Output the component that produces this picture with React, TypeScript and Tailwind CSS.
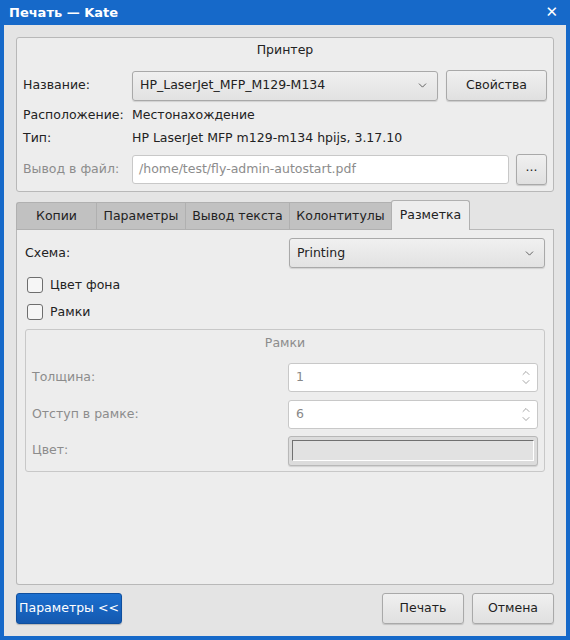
import { ChevronDown, ChevronUp } from "lucide-react";

function Btn({ children, className = "" }: { children: React.ReactNode; className?: string }) {
  return (
    <div
      className={`flex items-center justify-center rounded-[3px] border border-[#a9a9a9] bg-gradient-to-b from-[#f0f0f0] to-[#e0e0e0] shadow-[0_1px_1px_rgba(0,0,0,0.15)] text-[#1e1e1e] ${className}`}
    >
      {children}
    </div>
  );
}

function Combo({ value, className = "" }: { value: string; className?: string }) {
  return (
    <div
      className={`flex items-center justify-between rounded-[3px] border border-[#a9a9a9] bg-gradient-to-b from-[#f0f0f0] to-[#e2e2e2] pl-[7px] pr-[8px] shadow-[0_1px_1px_rgba(0,0,0,0.12)] ${className}`}
    >
      <span>{value}</span>
      <ChevronDown size={13} strokeWidth={1.5} className="text-[#444]" />
    </div>
  );
}

function Spin({ value }: { value: string }) {
  return (
    <div className="flex h-[29px] items-center justify-between rounded-[3px] border border-[#c8c8c8] bg-white pl-[7px] pr-[5px] text-[#888]">
      <span>{value}</span>
      <div className="flex flex-col items-center -space-y-[3px] text-[#777]">
        <ChevronUp size={12} strokeWidth={1.3} />
        <ChevronDown size={12} strokeWidth={1.3} />
      </div>
    </div>
  );
}

function Check({ label }: { label: string }) {
  return (
    <div className="flex items-center gap-[7px]">
      <div className="h-[16px] w-[16px] rounded-[3px] border border-[#6e6e6e] bg-[#f6f6f6]" />
      <span>{label}</span>
    </div>
  );
}

export default function App() {
  const tabs = ["Копии", "Параметры", "Вывод текста", "Колонтитулы"];
  return (
    <div
      className="flex h-[640px] w-[570px] flex-col bg-[#1669c9] px-[4px] pb-[4px] text-[12.5px] text-[#222]"
      style={{ fontFamily: '"DejaVu Sans", sans-serif' }}
    >
      {/* title bar */}
      <div className="flex h-[25px] shrink-0 items-center justify-between pl-[5px] pr-[8px] text-white">
        <span className="text-[13px] font-bold">Печать — Kate</span>
        <span className="text-[15px] leading-none">✕</span>
      </div>

      <div className="flex flex-1 flex-col bg-[#e4e4e4] px-[12px] pt-[12px]">
        {/* printer group */}
        <div className="h-[155px] rounded-[3px] border border-[#b8b8b8] bg-[#ededed] px-[6px]">
          <div className="pt-[2px] text-center leading-[20px]">Принтер</div>
          <div className="mt-[10px] flex items-center">
            <span className="w-[109px]">Название:</span>
            <Combo value="HP_LaserJet_MFP_M129-M134" className="h-[30px] w-[306px]" />
            <Btn className="ml-[8px] h-[31px] w-[101px]">Свойства</Btn>
          </div>
          <div className="mt-[5px] flex h-[18px] items-center">
            <span className="w-[109px]">Расположение:</span>
            <span>Местонахождение</span>
          </div>
          <div className="mt-[5px] flex h-[18px] items-center">
            <span className="w-[109px]">Тип:</span>
            <span>HP LaserJet MFP m129-m134 hpijs, 3.17.10</span>
          </div>
          <div className="mt-[7px] flex items-center">
            <span className="w-[109px] text-[#8c8c8c]">Вывод в файл:</span>
            <div className="flex h-[29px] w-[377px] items-center rounded-[3px] border border-[#c8c8c8] bg-white pl-[6px] text-[#8c8c8c]">
              /home/test/fly-admin-autostart.pdf
            </div>
            <Btn className="ml-[7px] h-[31px] w-[31px] pb-[4px]">...</Btn>
          </div>
        </div>

        {/* tabs */}
        <div className="mt-[9px] flex h-[29px] items-end">
          {tabs.map((t, i) => (
            <div
              key={t}
              className={`flex h-[28px] items-center justify-center border-b border-l border-t border-[#b0b0b0] bg-[#c1c1c1] ${
                i === 0 ? "w-[80px] rounded-tl-[3px]" : ""
              } ${i === 1 ? "w-[89px]" : ""} ${i === 2 ? "w-[104px]" : ""} ${i === 3 ? "w-[102px]" : ""}`}
            >
              {t}
            </div>
          ))}
          <div className="flex h-[30px] w-[79px] items-center justify-center rounded-t-[3px] border border-b-0 border-[#b0b0b0] bg-[#ededed] pb-[1px]">
            Разметка
          </div>
          <div className="flex-1 border-b border-[#b8b8b8]" />
        </div>

        <div className="h-[355px] rounded-b-[3px] border border-t-0 border-[#b8b8b8] bg-[#ededed] px-[8px] pt-[8px]">
          <div className="flex items-center">
            <span className="w-[264px]">Схема:</span>
            <Combo value="Printing" className="h-[30px] flex-1" />
          </div>
          <div className="mt-[8px] pl-[2px]">
            <Check label="Цвет фона" />
          </div>
          <div className="mt-[8px] pl-[2px]">
            <Check label="Рамки" />
          </div>

          <div className="mt-[7px] h-[143px] rounded-[3px] border border-[#c8c8c8] px-[6px] text-[#8c8c8c]">
            <div className="pt-[3px] text-center leading-[20px]">Рамки</div>
            <div className="mt-[10px] flex items-center">
              <span className="w-[256px]">Толщина:</span>
              <div className="flex-1">
                <Spin value="1" />
              </div>
            </div>
            <div className="mt-[8px] flex items-center">
              <span className="w-[256px]">Отступ в рамке:</span>
              <div className="flex-1">
                <Spin value="6" />
              </div>
            </div>
            <div className="mt-[7px] flex items-center">
              <span className="w-[256px]">Цвет:</span>
              <div className="flex h-[30px] flex-1 items-center rounded-[3px] border border-[#b8b8b8] bg-[#dcdcdc] px-[3px] shadow-[0_1px_1px_rgba(0,0,0,0.12)]">
                <div className="h-[21px] w-full border-l border-t border-[#707070] border-r-white border-b-white border-r border-b bg-[#e2e2e2]" />
              </div>
            </div>
          </div>
        </div>

        {/* bottom buttons */}
        <div className="mt-[8px] flex items-center">
          <div className="flex h-[31px] w-[106px] items-center justify-center rounded-[3px] border border-[#0f4f9e] bg-gradient-to-b from-[#1b6fcf] to-[#1459b0] text-white shadow-[0_1px_1px_rgba(0,0,0,0.2)]">
            Параметры &lt;&lt;
          </div>
          <div className="flex-1" />
          <Btn className="h-[31px] w-[82px]">Печать</Btn>
          <Btn className="ml-[8px] h-[31px] w-[82px]">Отмена</Btn>
        </div>
      </div>
    </div>
  );
}
